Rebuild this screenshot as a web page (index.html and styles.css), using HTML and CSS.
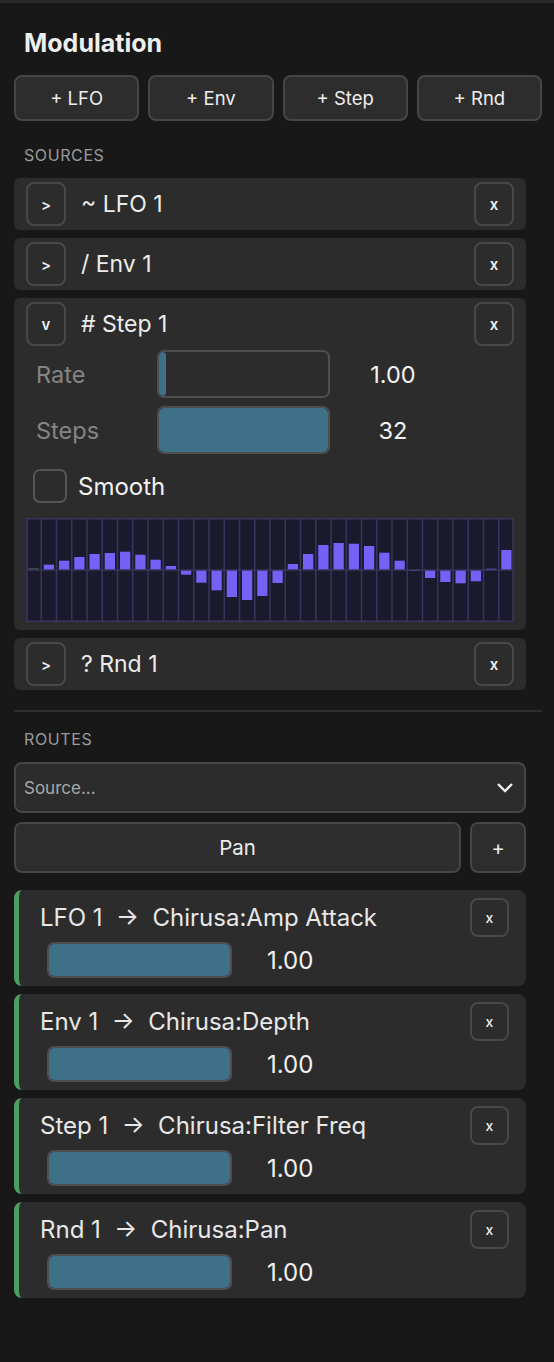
FILE: index.html
```html
<!DOCTYPE html>
<html lang="en">
<head>
  <meta charset="UTF-8" />
  <title>Modulation</title>
  <link rel="stylesheet" href="styles.css">
</head>
<body>

  <div class="panel">
    <h2 class="title">Modulation</h2>

    <!-- Add source buttons -->
    <div class="add-row">
      <button class="btn">+ LFO</button>
      <button class="btn">+ Env</button>
      <button class="btn">+ Step</button>
      <button class="btn">+ Rnd</button>
    </div>

    <div class="label">SOURCES</div>

    <div class="list">
      <div class="source">
        <div class="source-head">
          <button class="icon-btn">&gt;</button>
          <span class="source-name">~ LFO 1</span>
          <button class="icon-btn close">x</button>
        </div>
      </div>

      <div class="source">
        <div class="source-head">
          <button class="icon-btn">&gt;</button>
          <span class="source-name">/ Env 1</span>
          <button class="icon-btn close">x</button>
        </div>
      </div>

      <div class="source open">
        <div class="source-head">
          <button class="icon-btn">v</button>
          <span class="source-name"># Step 1</span>
          <button class="icon-btn close">x</button>
        </div>

        <div class="param">
          <span class="param-label">Rate</span>
          <div class="slider"><div class="fill" style="width: 4%"></div></div>
          <span class="param-value">1.00</span>
        </div>
        <div class="param">
          <span class="param-label">Steps</span>
          <div class="slider"><div class="fill" style="width: 100%"></div></div>
          <span class="param-value">32</span>
        </div>

        <label class="check">
          <span class="box"></span>
          <span>Smooth</span>
        </label>

        <svg id="steps" class="steps" viewBox="0 0 488 104" width="488" height="104"></svg>
      </div>

      <div class="source">
        <div class="source-head">
          <button class="icon-btn">&gt;</button>
          <span class="source-name">? Rnd 1</span>
          <button class="icon-btn close">x</button>
        </div>
      </div>
    </div>

    <hr class="divider">

    <div class="label">ROUTES</div>

    <div class="select">
      <span>Source...</span>
      <svg width="18" height="12" viewBox="0 0 18 12"><path d="M2 2 L9 9 L16 2" fill="none" stroke="#eee" stroke-width="2.4"/></svg>
    </div>

    <div class="target-row">
      <button class="btn target">Pan</button>
      <button class="btn add">+</button>
    </div>

    <div class="list routes">
      <div class="route">
        <div class="route-head">
          <span class="route-name">LFO 1 &nbsp;→&nbsp; Chirusa:Amp Attack</span>
          <button class="icon-btn small">x</button>
        </div>
        <div class="route-amt">
          <div class="slider"><div class="fill" style="width: 100%"></div></div>
          <span class="route-value">1.00</span>
        </div>
      </div>

      <div class="route">
        <div class="route-head">
          <span class="route-name">Env 1 &nbsp;→&nbsp; Chirusa:Depth</span>
          <button class="icon-btn small">x</button>
        </div>
        <div class="route-amt">
          <div class="slider"><div class="fill" style="width: 100%"></div></div>
          <span class="route-value">1.00</span>
        </div>
      </div>

      <div class="route">
        <div class="route-head">
          <span class="route-name">Step 1 &nbsp;→&nbsp; Chirusa:Filter Freq</span>
          <button class="icon-btn small">x</button>
        </div>
        <div class="route-amt">
          <div class="slider"><div class="fill" style="width: 100%"></div></div>
          <span class="route-value">1.00</span>
        </div>
      </div>

      <div class="route">
        <div class="route-head">
          <span class="route-name">Rnd 1 &nbsp;→&nbsp; Chirusa:Pan</span>
          <button class="icon-btn small">x</button>
        </div>
        <div class="route-amt">
          <div class="slider"><div class="fill" style="width: 100%"></div></div>
          <span class="route-value">1.00</span>
        </div>
      </div>
    </div>
  </div>

  <script>
    // step values in px from the center line (+ up, - down)
    const values = [0, 5.3, 9.3, 13, 16, 17, 18.3, 15.3, 10.3, 4, -4.7, -12.7, -20.3, -27, -30, -26,
                    -13, 6, 16, 25, 27, 26.3, 24, 17.3, 9.3, -1, -8, -12, -13.3, -11.3, 1.3, 20];
    const svg = document.getElementById("steps");
    const ns = "http://www.w3.org/2000/svg";
    const W = 488, H = 104, mid = 52;
    const col = W / values.length;

    function add(tag, attrs) {
      const el = document.createElementNS(ns, tag);
      for (const k in attrs) el.setAttribute(k, attrs[k]);
      svg.appendChild(el);
    }

    add("rect", { x: 0, y: 0, width: W, height: H, fill: "#1b1a2c" });

    values.forEach((v, i) => {
      const x = i * col + 2.5;
      if (i === 0) {
        add("rect", { x: x, y: mid - 1.5, width: col - 5, height: 1, fill: "#4d8a57" });
      } else if (v >= 0) {
        add("rect", { x: x, y: mid - v, width: col - 5, height: v, fill: "#7462f6" });
      } else {
        add("rect", { x: x, y: mid, width: col - 5, height: -v, fill: "#7462f6" });
      }
    });

    for (let i = 0; i <= values.length; i++) {
      const x = Math.min(Math.max(i * col, 0.75), W - 0.75);
      add("line", { x1: x, y1: 0, x2: x, y2: H, stroke: "#38345e", "stroke-width": 1.5 });
    }
    add("line", { x1: 0, y1: mid, x2: W, y2: mid, stroke: "#38345e", "stroke-width": 1.5 });
    add("rect", { x: 0.75, y: 0.75, width: W - 1.5, height: H - 1.5, fill: "none", stroke: "#38345e", "stroke-width": 1.5 });
  </script>

</body>
</html>
```

FILE: styles.css
```css
* {
  margin: 0;
  padding: 0;
  box-sizing: border-box;
}

body {
  font-family: Inter, 'Noto Sans', sans-serif;
  background: #181818;
  color: #ececec;
  border-top: 3px solid #2a2a2a;
}

.panel {
  padding: 26px 12px 40px 14px;
}

.title {
  font-size: 25px;
  font-weight: 700;
  line-height: 28px;
  padding-left: 10px;
  color: #eee;
}

button {
  font-family: inherit;
  color: #eee;
  cursor: pointer;
}

.btn {
  background: #2d2d2d;
  border: 2px solid #464646;
  border-radius: 8px;
  font-size: 18.5px;
  height: 46px;
}

.add-row {
  display: grid;
  grid-template-columns: repeat(4, 1fr);
  gap: 9px;
  margin-top: 18px;
}

.label {
  font-size: 16px;
  letter-spacing: 0.6px;
  line-height: 18px;
  color: #9a9a9a;
  padding-left: 10px;
  margin-top: 25px;
  margin-bottom: 14px;
}

.list {
  display: flex;
  flex-direction: column;
  gap: 8px;
  margin-right: 16px;
}

/* Sources */
.source {
  background: #2c2c2c;
  border-radius: 6px;
  padding: 4px 12px;
}

.source.open {
  padding-bottom: 8px;
}

.source-head {
  display: flex;
  align-items: center;
  height: 44px;
}

.icon-btn {
  width: 40px;
  height: 44px;
  background: #2c2c2c;
  border: 2px solid #484848;
  border-radius: 8px;
  font-size: 15px;
  font-weight: 600;
}

.source-name {
  flex: 1;
  font-size: 23px;
  margin-left: 15px;
  color: #ececec;
}

.param {
  display: grid;
  grid-template-columns: 121px 173px 126px;
  align-items: center;
  padding-left: 10px;
  height: 48px;
  margin-top: 4px;
}

.param + .param {
  margin-top: 8px;
}

.param-label {
  font-size: 23.5px;
  color: #858585;
}

.param-value {
  font-size: 23.5px;
  text-align: center;
  color: #f2f2f2;
}

.slider {
  height: 100%;
  border: 2px solid #4e4e4e;
  border-radius: 7px;
  overflow: hidden;
  background: #2c2c2c;
}

.fill {
  height: 100%;
  background: #3e7188;
  border-radius: 5px;
}

.check {
  display: flex;
  align-items: center;
  gap: 11px;
  margin: 15px 0 0 7px;
  font-size: 24px;
  color: #f2f2f2;
}

.box {
  width: 34px;
  height: 34px;
  border: 2px solid #555;
  border-radius: 7px;
}

.steps {
  display: block;
  margin-top: 15px;
}

/* Routes */
.divider {
  border: none;
  border-top: 2px solid #2e2e2e;
  margin-top: 20px;
}

.divider + .label {
  margin-top: 18px;
}

.select {
  margin-right: 16px;
  height: 51px;
  background: #2c2c2c;
  border: 2px solid #464646;
  border-radius: 8px;
  display: flex;
  align-items: center;
  justify-content: space-between;
  padding: 0 10px 0 8px;
  font-size: 17px;
  color: #a8a8a8;
}

.target-row {
  display: flex;
  gap: 9px;
  margin: 9px 16px 17px 0;
}

.target {
  flex: 1;
  height: 51px;
  font-size: 20.5px;
}

.add {
  width: 56px;
  height: 51px;
  font-size: 20px;
}

.route {
  background: #2c2c2c;
  border-radius: 8px;
  border-left: 5px solid #4e9d62;
  padding: 8px 17px 8px 21px;
  height: 96px;
}

.route-head {
  display: flex;
  align-items: center;
  justify-content: space-between;
}

.route-name {
  font-size: 24px;
  color: #e8e8e8;
}

.icon-btn.small {
  width: 39px;
  height: 39px;
  font-size: 14px;
  font-weight: 500;
}

.route-amt {
  display: flex;
  align-items: center;
  gap: 35px;
  margin: 5px 0 0 7px;
  height: 36px;
}

.route-amt .slider {
  width: 185px;
}

.route-value {
  font-size: 24px;
  color: #f2f2f2;
}
```
